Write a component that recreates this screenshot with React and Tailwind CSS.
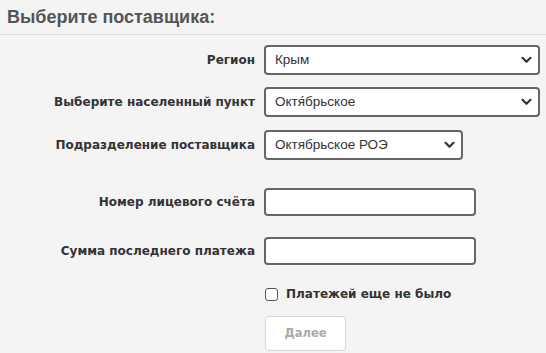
import React from "react";

const Chevron = () => (
  <svg width="11" height="8" viewBox="0 0 11 8" className="pointer-events-none absolute right-[8px] top-1/2 -translate-y-1/2">
    <path d="M1.5 1.8 L5.5 5.8 L9.5 1.8" fill="none" stroke="#333" strokeWidth="2.2" strokeLinecap="round" strokeLinejoin="round" />
  </svg>
);

const Sel = ({ value, w }) => (
  <div className={`relative h-[30px] ${w}`}>
    <select
      defaultValue={value}
      className="h-full w-full appearance-none rounded-[4px] border-2 border-[#666] bg-white pl-[9px] text-[13.5px] text-[#333] outline-none"
      style={{ fontFamily: '"Liberation Sans", Arial, sans-serif' }}
    >
      <option>{value}</option>
    </select>
    <Chevron />
  </div>
);

const Label = ({ children }) => (
  <div className="w-[255px] shrink-0 text-right text-[12px] font-bold text-[#333]" style={{ fontFamily: '"DejaVu Sans", Verdana, sans-serif' }}>
    {children}
  </div>
);

export default function App() {
  return (
    <div className="h-[353px] w-[546px] overflow-hidden bg-[#f4f4f4]" style={{ fontFamily: '"Liberation Sans", Arial, sans-serif' }}>
      <div className="border-b border-[#dcdcdc] px-[7px] pb-[6px] pt-[7px]">
        <h1 className="text-[18px] font-bold leading-[21px] text-[#555]">Выберите поставщика:</h1>
      </div>
      <div className="pt-[10px]">
        <div className="flex items-center gap-[9px]">
          <Label>Регион</Label>
          <Sel value="Крым" w="w-[276px]" />
        </div>
        <div className="mt-[12px] flex items-center gap-[9px]">
          <Label>Выберите населенный пункт</Label>
          <Sel value="Октя́брьское" w="w-[276px]" />
        </div>
        <div className="mt-[13px] flex items-center gap-[9px]">
          <Label>Подразделение поставщика</Label>
          <Sel value="Октябрьское РОЭ" w="w-[199px]" />
        </div>
        <div className="mt-[28px] flex items-center gap-[9px]">
          <Label>Номер лицевого счёта</Label>
          <input className="h-[28px] w-[212px] rounded-[4px] border-2 border-[#666] bg-white outline-none" />
        </div>
        <div className="mt-[21px] flex items-center gap-[9px]">
          <Label>Сумма последнего платежа</Label>
          <input className="h-[28px] w-[212px] rounded-[4px] border-2 border-[#666] bg-white outline-none" />
        </div>
        <div className="ml-[265px] mt-[20px] flex items-center gap-[8px]">
          <span className="h-[13px] w-[13px] rounded-[3px] border border-[#555] bg-white" />
          <span className="text-[12px] font-bold text-[#333]" style={{ fontFamily: '"DejaVu Sans", Verdana, sans-serif' }}>Платежей еще не было</span>
        </div>
        <div className="ml-[265px] mt-[13px]">
          <button className="h-[35px] w-[81px] rounded-[4px] border border-[#d6d6d6] bg-white text-[11.5px] font-bold text-[#aaa]" style={{ fontFamily: '"DejaVu Sans", Verdana, sans-serif' }}>
            Далее
          </button>
        </div>
      </div>
    </div>
  );
}
